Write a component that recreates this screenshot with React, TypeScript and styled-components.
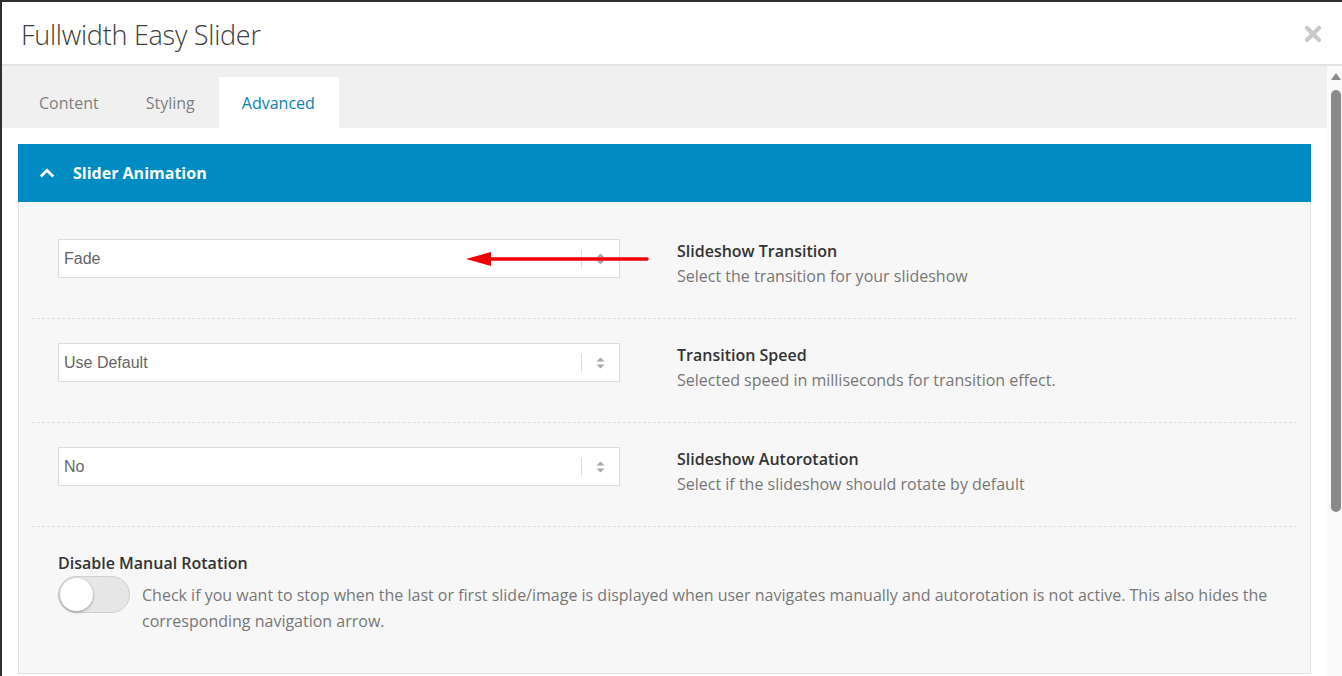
import React from "react";
import styled, { createGlobalStyle } from "styled-components";

const Global = createGlobalStyle`
  html, body { margin: 0; padding: 0; background: #2f2f2f; overflow: hidden; }
  body { font-family: "Open Sans", "Noto Sans", sans-serif; }
  * { box-sizing: border-box; }
`;

const Modal = styled.div`
  margin: 2px 0 0 2px;
  width: 1340px;
  height: 674px;
  background: #fff;
  display: flex;
  flex-direction: column;
  overflow: hidden;
`;

const Header = styled.div`
  height: 64px;
  flex: none;
  display: flex;
  align-items: center;
  justify-content: space-between;
  padding: 0 20px 0 19px;
  border-bottom: 2px solid #e3e3e3;
`;

const Title = styled.h1`
  margin: 0;
  font-family: "Open Sans", sans-serif;
  font-weight: 300;
  font-size: 27px;
  color: #3c3c3c;
  letter-spacing: -0.25px;
  padding-top: 2px;
`;

const CloseButton = styled.button`
  border: 0;
  background: none;
  padding: 0;
  width: 18px;
  height: 18px;
  display: flex;
  cursor: pointer;
  margin-top: 1px;
`;

const Body = styled.div`
  flex: 1;
  display: flex;
  min-height: 0;
`;

const Scroller = styled.div`
  flex: 1;
  min-width: 0;
  display: flex;
  flex-direction: column;
`;

const Scrollbar = styled.div`
  width: 15px;
  flex: none;
  background: #fafafa;
  display: flex;
  flex-direction: column;
  align-items: center;
  padding: 7px 1px 0 3px;
  gap: 10px;
`;

const ScrollArrow = styled.div`
  width: 0;
  height: 0;
  border-left: 5px solid transparent;
  border-right: 5px solid transparent;
  border-bottom: 7px solid #8a8a8a;
`;

const ScrollThumb = styled.div`
  width: 10px;
  height: 422px;
  border-radius: 5px;
  background: #8a8a8a;
`;

const TabBar = styled.div`
  height: 62px;
  flex: none;
  background: #f0f0f0;
  display: flex;
  align-items: flex-end;
  padding: 0 14px 0 14px;
`;

const Tab = styled.div<{ $active?: boolean }>`
  height: 51px;
  padding: 1px 24px 0 23px;
  display: flex;
  align-items: center;
  font-size: 16px;
  color: ${(p) => (p.$active ? "#0a7fb3" : "#808080")};
  background: ${(p) => (p.$active ? "#fff" : "transparent")};
`;

const Content = styled.div`
  padding: 16px 16px 0;
  flex: 1;
`;

const Panel = styled.section`
  border: 1px solid #e2e2e2;
  border-top: 0;
  background: #f7f7f7;
`;

const PanelHeader = styled.div`
  height: 58px;
  margin: 0 -1px;
  background: #008cc2;
  display: flex;
  align-items: center;
  padding: 0 0 0 21px;
  gap: 18px;
  color: #fff;
  font-weight: 700;
  font-size: 16px;
`;

const PanelBody = styled.div`
  padding: 13px 13px 0;
`;

const Row = styled.div<{ $last?: boolean }>`
  position: relative;
  padding: ${(p) => (p.$last ? "24px 26px 39px" : "24px 26px 29px")};
  border-bottom: ${(p) => (p.$last ? "0" : "1px dashed #e0e0e0")};
  display: ${(p) => (p.$last ? "block" : "grid")};
  grid-template-columns: 562px 1fr;
  column-gap: 57px;
  align-items: start;
`;

const Select = styled.div`
  height: 39px;
  border: 1px solid #dcdcdc;
  background: #fff;
  display: flex;
  align-items: center;
`;

const SelectValue = styled.span`
  flex: 1;
  padding-left: 5px;
  font-family: "Liberation Sans", Arial, sans-serif;
  font-size: 16px;
  color: #666;
`;

const SelectDivider = styled.span`
  width: 1px;
  height: 18px;
  background: #dedede;
`;

const SelectArrows = styled.span`
  width: 37px;
  display: flex;
  justify-content: center;
  align-items: center;
`;

const FieldInfo = styled.div`
  display: flex;
  flex-direction: column;
`;

const FieldTitle = styled.div`
  font-size: 16px;
  font-weight: 600;
  line-height: 24px;
  color: #333;
`;

const FieldDesc = styled.div`
  font-size: 16px;
  line-height: 26px;
  color: #777;
`;

const ToggleRow = styled.div`
  display: flex;
  gap: 12px;
  align-items: flex-start;
  margin-top: 1px;
`;

const Toggle = styled.div`
  width: 72px;
  height: 37px;
  flex: none;
  border-radius: 19px;
  background: #e6e6e6;
  border: 1px solid #cfcfcf;
  position: relative;
`;

const Knob = styled.div`
  position: absolute;
  left: 1px;
  top: 1px;
  width: 33px;
  height: 33px;
  border-radius: 50%;
  background: #fff;
  box-shadow: 0 1px 3px rgba(0, 0, 0, 0.35);
`;

const ToggleDesc = styled(FieldDesc)`
  padding-top: 6px;
`;

const Annotation = styled.svg`
  position: absolute;
  left: 434px;
  top: 37px;
  overflow: visible;
`;

const Chevrons = () => (
  <svg width="9" height="14" viewBox="0 0 9 14">
    <path d="M4.5 1.5 L8.5 5.5 H0.5 Z" fill="#a8a8a8" />
    <path d="M4.5 12.5 L8.5 8.5 H0.5 Z" fill="#a8a8a8" />
  </svg>
);

const SelectBox = ({ value }: { value: string }) => (
  <Select>
    <SelectValue>{value}</SelectValue>
    <SelectDivider />
    <SelectArrows>
      <Chevrons />
    </SelectArrows>
  </Select>
);

const fields = [
  { value: "Fade", title: "Slideshow Transition", desc: "Select the transition for your slideshow" },
  { value: "Use Default", title: "Transition Speed", desc: "Selected speed in milliseconds for transition effect." },
  { value: "No", title: "Slideshow Autorotation", desc: "Select if the slideshow should rotate by default" },
];

export default function App() {
  return (
    <>
      <Global />
      <Modal>
        <Header>
          <Title>Fullwidth Easy Slider</Title>
          <CloseButton aria-label="Close">
            <svg width="18" height="18" viewBox="0 0 18 18">
              <path d="M3 3 L15 15 M15 3 L3 15" stroke="#c9c9c9" strokeWidth="4.2" strokeLinecap="round" />
            </svg>
          </CloseButton>
        </Header>
        <Body>
          <Scroller>
            <TabBar>
              <Tab>Content</Tab>
              <Tab>Styling</Tab>
              <Tab $active>Advanced</Tab>
            </TabBar>
            <Content>
              <Panel>
                <PanelHeader>
                  <svg width="16" height="10" viewBox="0 0 16 10">
                    <path d="M1.8 8.5 L8 2.3 L14.2 8.5" fill="none" stroke="#fff" strokeWidth="2.8" />
                  </svg>
                  Slider Animation
                </PanelHeader>
                <PanelBody>
                  {fields.map((f, i) => (
                    <Row key={f.title}>
                      <SelectBox value={f.value} />
                      <FieldInfo>
                        <FieldTitle>{f.title}</FieldTitle>
                        <FieldDesc>{f.desc}</FieldDesc>
                      </FieldInfo>
                      {i === 0 && (
                        <Annotation width="181" height="14" viewBox="0 0 181 14">
                          <path d="M22 7 H181" stroke="#f00000" strokeWidth="3.5" strokeLinecap="round" />
                          <path d="M0 7 L25 0 L25 14 Z" fill="#f00000" />
                        </Annotation>
                      )}
                    </Row>
                  ))}
                  <Row $last>
                    <FieldTitle>Disable Manual Rotation</FieldTitle>
                    <ToggleRow>
                      <Toggle>
                        <Knob />
                      </Toggle>
                      <ToggleDesc>
                        Check if you want to stop when the last or first slide/image is displayed when user navigates manually and autorotation is not active. This also hides the
                        <br />
                        corresponding navigation arrow.
                      </ToggleDesc>
                    </ToggleRow>
                  </Row>
                </PanelBody>
              </Panel>
            </Content>
          </Scroller>
          <Scrollbar>
            <ScrollArrow />
            <ScrollThumb />
          </Scrollbar>
        </Body>
      </Modal>
    </>
  );
}
